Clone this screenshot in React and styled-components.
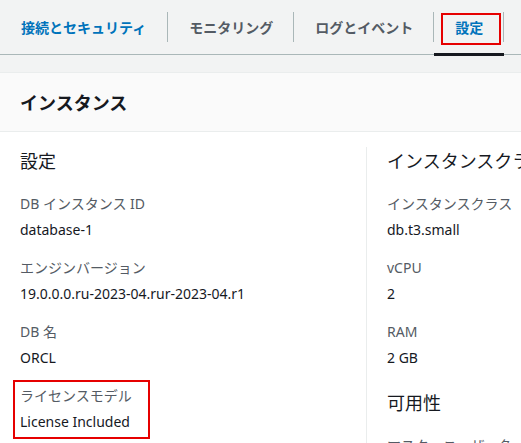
import React from "react";
import styled, { createGlobalStyle } from "styled-components";

const GlobalStyle = createGlobalStyle`
  html, body {
    margin: 0;
    padding: 0;
    background: #f2f3f3;
    overflow: hidden;
  }
  body {
    font-family: "Noto Sans", "Open Sans", "Noto Sans CJK JP", sans-serif;
    color: #16191f;
  }
`;

const Page = styled.div`
  width: 521px;
  height: 443px;
  overflow: hidden;
`;

const TabBar = styled.div`
  display: flex;
  height: 54px;
  border-bottom: 1px solid #aab7b8;
`;

const Tab = styled.div`
  position: relative;
  display: flex;
  align-items: center;
  padding: 12px 0;
  font-size: 14px;
  font-weight: 700;
  color: ${(p) => (p.$blue ? "#0073bb" : "#545b64")};
  white-space: nowrap;

  ${(p) =>
    p.$active &&
    `
    &::after {
      content: "";
      position: absolute;
      left: 0;
      right: 0;
      bottom: -2px;
      height: 3px;
      background: #16191f;
    }
  `}
`;

const TabLabel = styled.span`
  display: flex;
  align-items: center;
  height: 30px;
  padding: ${(p) => (p.$first ? "0 21px" : "0 20px 0 21px")};
  border-right: 1px solid #aab7b8;
`;

const Marker = styled.span`
  position: absolute;
  top: 13px;
  bottom: 9px;
  left: 7px;
  right: 3px;
  border: 2px solid #e60000;
`;

const Container = styled.div`
  margin-top: 17px;
  background: #ffffff;
  border-top: 1px solid #eaeded;
`;

const Header = styled.div`
  display: flex;
  align-items: center;
  height: 58px;
  padding: 0 20px;
  background: #fafafa;
  border-bottom: 1px solid #eaeded;
  font-size: 18px;
  font-weight: 700;
`;

const Body = styled.div`
  display: flex;
  padding: 15px 0 0 20px;
`;

const Column = styled.div`
  flex: none;
  width: 346px;
  white-space: nowrap;
`;

const RightColumn = styled(Column)`
  width: auto;
  border-left: 1px solid #eaeded;
  padding-left: 20px;
`;

const SectionTitle = styled.div`
  font-size: 18px;
  line-height: 28px;
  margin-bottom: 19px;
  color: #16191f;
`;

const Field = styled.div`
  position: relative;
  margin-bottom: 18px;

  ${(p) =>
    p.$marked &&
    `
    &::after {
      content: "";
      position: absolute;
      top: -6px;
      left: -7px;
      width: 133px;
      bottom: -7px;
      border: 2px solid #e60000;
    }
  `}
`;

const Label = styled.div`
  font-size: 14px;
  line-height: 20px;
  color: #545b64;
  margin-bottom: 6px;
`;

const Value = styled.div`
  font-size: 14px;
  line-height: 20px;
  color: #16191f;
`;

const SubSection = styled.div`
  margin-top: 21px;
`;

const tabs = [
  { label: "接続とセキュリティ", blue: true },
  { label: "モニタリング" },
  { label: "ログとイベント" },
  { label: "設定", blue: true, active: true, marked: true },
];

const leftFields = [
  { label: "DB インスタンス ID", value: "database-1" },
  { label: "エンジンバージョン", value: "19.0.0.0.ru-2023-04.rur-2023-04.r1" },
  { label: "DB 名", value: "ORCL" },
  { label: "ライセンスモデル", value: "License Included", marked: true },
];

const rightFields = [
  { label: "インスタンスクラス", value: "db.t3.small" },
  { label: "vCPU", value: "2" },
  { label: "RAM", value: "2 GB" },
];

const App = () => {
  return (
    <Page>
      <GlobalStyle />
      <TabBar>
        {tabs.map((t, i) => (
          <Tab key={t.label} $blue={t.blue} $active={t.active}>
            <TabLabel $first={i === 0}>{t.label}</TabLabel>
            {t.marked && <Marker />}
          </Tab>
        ))}
      </TabBar>
      <Container>
        <Header>インスタンス</Header>
        <Body>
          <Column>
            <SectionTitle>設定</SectionTitle>
            {leftFields.map((f) => (
              <Field key={f.label} $marked={f.marked}>
                <Label>{f.label}</Label>
                <Value>{f.value}</Value>
              </Field>
            ))}
          </Column>
          <RightColumn>
            <SectionTitle>インスタンスクラス</SectionTitle>
            {rightFields.map((f) => (
              <Field key={f.label}>
                <Label>{f.label}</Label>
                <Value>{f.value}</Value>
              </Field>
            ))}
            <SubSection>
              <SectionTitle>可用性</SectionTitle>
              <Field>
                <Label>マスターユーザー名</Label>
                <Value>admin</Value>
              </Field>
            </SubSection>
          </RightColumn>
        </Body>
      </Container>
    </Page>
  );
};

export default App;
